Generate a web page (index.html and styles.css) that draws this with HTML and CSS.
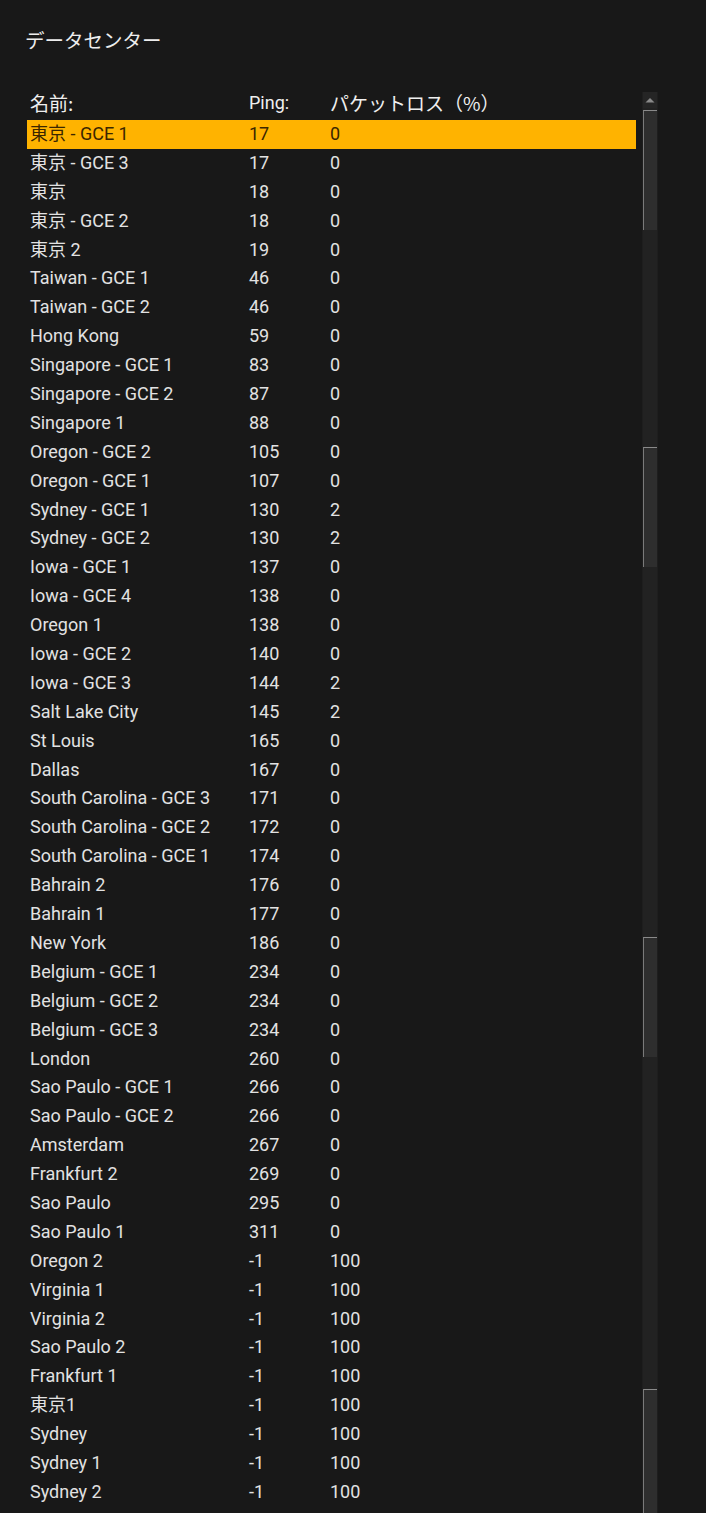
FILE: index.html
```html
<!DOCTYPE html>
<html lang="ja">
<head>
<meta charset="utf-8">
<title>データセンター</title>
<link rel="stylesheet" href="styles.css">
</head>
<body>
<div class="panel">
  <h1 class="title">データセンター</h1>
  <div class="table-wrap">
    <div class="table">
      <div class="row head"><span class="cjk">名前:</span><span>Ping:</span><span class="cjk">パケットロス（%）</span></div>
      <div class="row sel"><span>東京 - GCE 1</span><span>17</span><span>0</span></div>
      <div class="row"><span>東京 - GCE 3</span><span>17</span><span>0</span></div>
      <div class="row"><span>東京</span><span>18</span><span>0</span></div>
      <div class="row"><span>東京 - GCE 2</span><span>18</span><span>0</span></div>
      <div class="row"><span>東京 2</span><span>19</span><span>0</span></div>
      <div class="row"><span>Taiwan - GCE 1</span><span>46</span><span>0</span></div>
      <div class="row"><span>Taiwan - GCE 2</span><span>46</span><span>0</span></div>
      <div class="row"><span>Hong Kong</span><span>59</span><span>0</span></div>
      <div class="row"><span>Singapore - GCE 1</span><span>83</span><span>0</span></div>
      <div class="row"><span>Singapore - GCE 2</span><span>87</span><span>0</span></div>
      <div class="row"><span>Singapore 1</span><span>88</span><span>0</span></div>
      <div class="row"><span>Oregon - GCE 2</span><span>105</span><span>0</span></div>
      <div class="row"><span>Oregon - GCE 1</span><span>107</span><span>0</span></div>
      <div class="row"><span>Sydney - GCE 1</span><span>130</span><span>2</span></div>
      <div class="row"><span>Sydney - GCE 2</span><span>130</span><span>2</span></div>
      <div class="row"><span>Iowa - GCE 1</span><span>137</span><span>0</span></div>
      <div class="row"><span>Iowa - GCE 4</span><span>138</span><span>0</span></div>
      <div class="row"><span>Oregon 1</span><span>138</span><span>0</span></div>
      <div class="row"><span>Iowa - GCE 2</span><span>140</span><span>0</span></div>
      <div class="row"><span>Iowa - GCE 3</span><span>144</span><span>2</span></div>
      <div class="row"><span>Salt Lake City</span><span>145</span><span>2</span></div>
      <div class="row"><span>St Louis</span><span>165</span><span>0</span></div>
      <div class="row"><span>Dallas</span><span>167</span><span>0</span></div>
      <div class="row"><span>South Carolina - GCE 3</span><span>171</span><span>0</span></div>
      <div class="row"><span>South Carolina - GCE 2</span><span>172</span><span>0</span></div>
      <div class="row"><span>South Carolina - GCE 1</span><span>174</span><span>0</span></div>
      <div class="row"><span>Bahrain 2</span><span>176</span><span>0</span></div>
      <div class="row"><span>Bahrain 1</span><span>177</span><span>0</span></div>
      <div class="row"><span>New York</span><span>186</span><span>0</span></div>
      <div class="row"><span>Belgium - GCE 1</span><span>234</span><span>0</span></div>
      <div class="row"><span>Belgium - GCE 2</span><span>234</span><span>0</span></div>
      <div class="row"><span>Belgium - GCE 3</span><span>234</span><span>0</span></div>
      <div class="row"><span>London</span><span>260</span><span>0</span></div>
      <div class="row"><span>Sao Paulo - GCE 1</span><span>266</span><span>0</span></div>
      <div class="row"><span>Sao Paulo - GCE 2</span><span>266</span><span>0</span></div>
      <div class="row"><span>Amsterdam</span><span>267</span><span>0</span></div>
      <div class="row"><span>Frankfurt 2</span><span>269</span><span>0</span></div>
      <div class="row"><span>Sao Paulo</span><span>295</span><span>0</span></div>
      <div class="row"><span>Sao Paulo 1</span><span>311</span><span>0</span></div>
      <div class="row"><span>Oregon 2</span><span>-1</span><span>100</span></div>
      <div class="row"><span>Virginia 1</span><span>-1</span><span>100</span></div>
      <div class="row"><span>Virginia 2</span><span>-1</span><span>100</span></div>
      <div class="row"><span>Sao Paulo 2</span><span>-1</span><span>100</span></div>
      <div class="row"><span>Frankfurt 1</span><span>-1</span><span>100</span></div>
      <div class="row"><span>東京1</span><span>-1</span><span>100</span></div>
      <div class="row"><span>Sydney</span><span>-1</span><span>100</span></div>
      <div class="row"><span>Sydney 1</span><span>-1</span><span>100</span></div>
      <div class="row"><span>Sydney 2</span><span>-1</span><span>100</span></div>
    </div>
    <div class="scrollbar">
      <div class="arrow"><svg width="14" height="16" viewBox="0 0 14 16"><path d="M2.5 10.5 L7 6 L11.5 10.5 Z" fill="#8a8a8a"/></svg></div>
      <div class="track">
        <div class="gap g1"></div>
        <div class="thumb"></div>
        <div class="gap g2"></div>
        <div class="thumb"></div>
        <div class="gap g3"></div>
        <div class="thumb"></div>
        <div class="gap g4"></div>
        <div class="thumb last"></div>
      </div>
    </div>
  </div>
</div>
</body>
</html>
```

FILE: styles.css
```css
html, body {
  margin: 0;
  padding: 0;
  background: #181818;
}
body {
  height: 1513px;
  overflow: hidden;
  font-family: Roboto, "Noto Sans CJK JP", sans-serif;
  color: #e2e2e2;
}
.panel {
  padding: 28px 0 0 0;
}
.title {
  margin: 0 0 37px 25px;
  font-size: 19.5px;
  font-weight: 400;
  line-height: 24px;
  color: #ededed;
  font-family: "Noto Sans CJK JP", sans-serif;
}
.table-wrap {
  display: flex;
  gap: 6px;
  padding-left: 27px;
  align-items: stretch;
}
.table {
  width: 609px;
  display: flex;
  flex-direction: column;
}
.row {
  display: grid;
  grid-template-columns: 219px 81px 1fr;
  height: 28.9px;
  line-height: 28.9px;
  padding-left: 3px;
  font-size: 18px;
  white-space: nowrap;
}
.row span {
  display: block;
}
.row.head {
  height: 28px;
  line-height: 28px;
  padding-bottom: 3px;
  color: #efefef;
}
.row.head .cjk {
  font-family: "Noto Sans CJK JP", sans-serif;
  font-size: 19px;
}
.row.sel {
  background: #ffb300;
  color: #3a2600;
}
.scrollbar {
  width: 16px;
  margin-top: 3px;
  display: flex;
  flex-direction: column;
  background: #1e1e1e;
  height: 1421px;
}
.arrow {
  height: 16px;
  background: #252525;
  margin: 0 1px;
  display: flex;
}
.track {
  flex: 1;
  display: flex;
  flex-direction: column;
  background: #222222;
  margin: 0 1px;
}
.gap.g1 { height: 2px; }
.gap.g2 { height: 217px; }
.gap.g3 { height: 370px; }
.gap.g4 { height: 332px; }
.thumb {
  height: 120px;
  background: #2e2e2e;
  border-left: 1px solid #7a7a7a;
  border-top: 1px solid #8a8a8a;
  box-sizing: border-box;
}
.thumb.last {
  flex: 1;
  height: auto;
}
```
